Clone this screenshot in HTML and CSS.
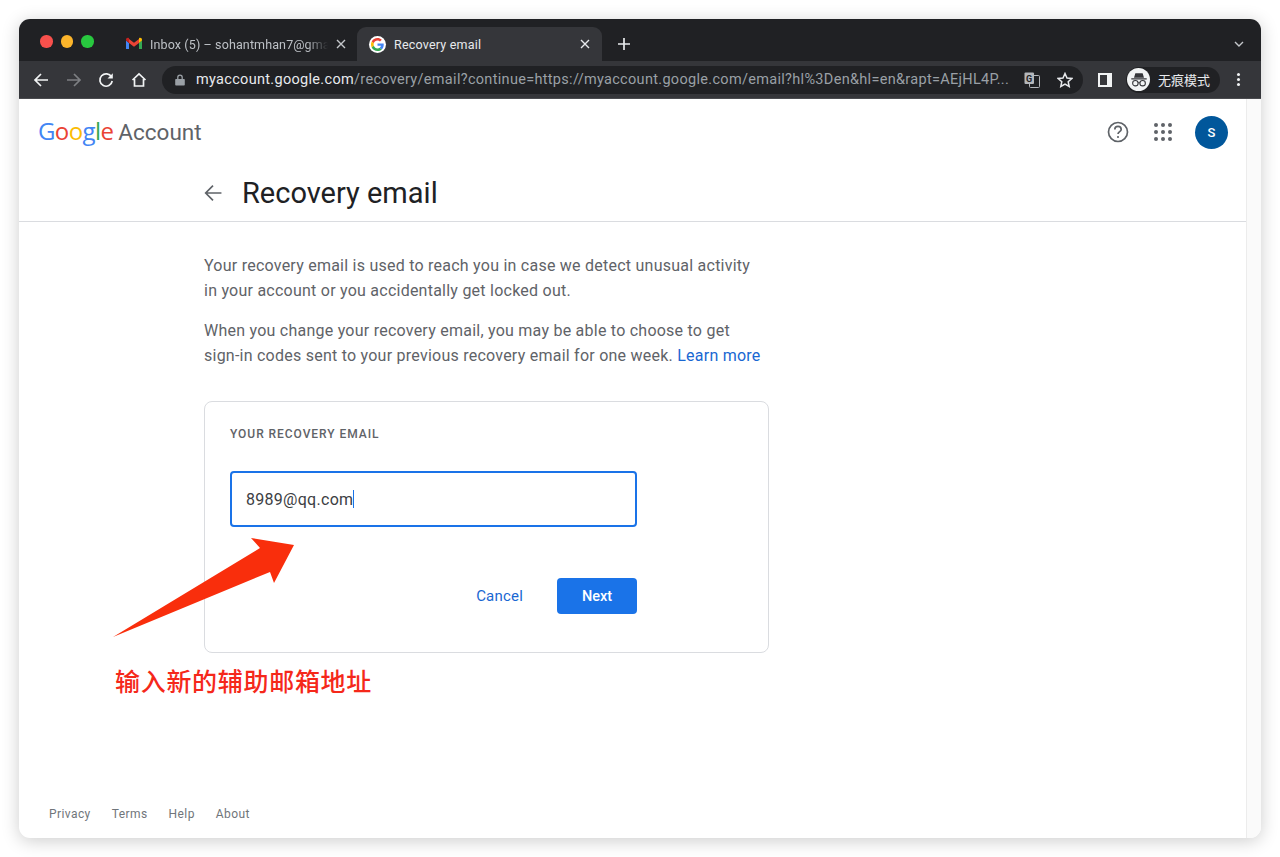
FILE: index.html
```html
<!DOCTYPE html>
<html lang="en">
<head>
    <meta charset="UTF-8">
    <meta name="viewport" content="width=device-width, initial-scale=1.0">
    <title>Recovery email</title>
    <link rel="stylesheet" href="styles.css">
</head>
<body>

<div class="window">

    <!-- Tab strip -->
    <div class="tabstrip">
        <div class="traffic">
            <span class="dot dot-red"></span>
            <span class="dot dot-yellow"></span>
            <span class="dot dot-green"></span>
        </div>

        <div class="tab tab-inactive">
            <svg class="favicon" viewBox="0 0 16 16">
                <path fill="#4285f4" d="M0 13h3V7L0 4.500z"/>
                <path fill="#34a853" d="M13 13h3V4.500L13 7z"/>
                <path fill="#ea4335" d="M3 7V3l5 3.800L13 3v4l-5 3.800z"/>
                <path fill="#c5221f" d="M0 4.500V3.500C0 2 1.800 1.200 3 2.200V7z"/>
                <path fill="#fbbc04" d="M16 4.500V3.500C16 2 14.200 1.200 13 2.200V7z"/>
            </svg>
            <span class="tab-title tab-title-fade">Inbox (5) – sohantmhan7@gma</span>
            <svg class="tab-close" viewBox="0 0 10 10"><path d="M1 1l8 8M9 1l-8 8"/></svg>
        </div>

        <div class="tab tab-active">
            <span class="favicon-ring">
                <svg class="favicon-g" viewBox="0 0 48 48">
                    <path fill="#ea4335" d="M24 9.500c3.500 0 6.700 1.300 9.100 3.500l6.800-6.800C35.800 2.400 30.200 0 24 0 14.600 0 6.500 5.400 2.600 13.200l7.900 6.100C12.400 13.600 17.700 9.500 24 9.500z"/>
                    <path fill="#4285f4" d="M47 24.500c0-1.600-.1-3.100-.4-4.500H24v9h12.900c-.6 3-2.200 5.500-4.700 7.200l7.700 6C44.400 38 47 31.800 47 24.500z"/>
                    <path fill="#fbbc05" d="M10.500 28.700c-.5-1.500-.8-3-.8-4.700s.3-3.200.8-4.700l-7.900-6.100C.9 16.500 0 20.100 0 24s.9 7.500 2.600 10.800z"/>
                    <path fill="#34a853" d="M24 48c6.500 0 11.900-2.100 15.900-5.800l-7.700-6c-2.200 1.500-4.900 2.300-8.200 2.300-6.300 0-11.600-4.100-13.500-9.800l-7.900 6.100C6.500 42.600 14.600 48 24 48z"/>
                </svg>
            </span>
            <span class="tab-title tab-title-active">Recovery email</span>
            <svg class="tab-close tab-close-active" viewBox="0 0 10 10"><path d="M1 1l8 8M9 1l-8 8"/></svg>
        </div>

        <svg class="new-tab" viewBox="0 0 14 14"><path d="M7 1v12M1 7h12"/></svg>
        <svg class="tab-search" viewBox="0 0 10 6"><path d="M1 1l4 4 4-4"/></svg>
    </div>

    <!-- Toolbar -->
    <div class="toolbar">
        <div class="nav-buttons">
            <svg class="nav-icon" viewBox="0 0 16 16"><path d="M15 8H2M8 2L2 8l6 6"/></svg>
            <svg class="nav-icon nav-icon-off" viewBox="0 0 16 16"><path d="M1 8h13M8 2l6 6-6 6"/></svg>
            <svg class="nav-icon" viewBox="0 0 16 16"><path d="M13.500 5A6.200 6.200 0 1 0 14.200 9"/><path class="fill-white" d="M14.800 1.200v5.300H9.500z"/></svg>
            <svg class="nav-icon" viewBox="0 0 16 16"><path d="M1.500 8L8 2l6.500 6M3.500 7v7h9V7"/></svg>
        </div>

        <div class="omnibox">
            <svg class="lock" viewBox="0 0 10 12">
                <path d="M1 5h8a.8.8 0 0 1 .8.8v5a.8.8 0 0 1-.8.800H1a.8.8 0 0 1-.8-.8v-5A.8.8 0 0 1 1 5z"/>
                <path class="lock-loop" d="M2.800 5V3.300a2.200 2.200 0 0 1 4.400 0V5"/>
            </svg>
            <span class="url"><span class="url-host">myaccount.google.com</span>/recovery/email?continue=https://myaccount.google.com/email?hl%3Den&amp;hl=en&amp;rapt=AEjHL4P...</span>
            <svg class="translate" viewBox="0 0 16 16">
                <rect class="translate-back" x="5.500" y="3.500" width="10" height="12" rx="1"/>
                <rect class="translate-front" x="0.500" y="0.500" width="9.500" height="11.500" rx="1"/>
                <text class="translate-mark" x="2" y="9.500">G</text>
            </svg>
            <svg class="star" viewBox="0 0 16 16"><path d="M8 1.500l2 4.500 4.800.5-3.600 3.200 1 4.800L8 12.100l-4.200 2.400 1-4.800L1.200 6.500 6 6z"/></svg>
        </div>

        <div class="side-panel"><span></span></div>

        <div class="incognito">
            <span class="incognito-badge">
                <svg viewBox="0 0 22 22">
                    <path class="spy-hat" d="M7 3.500h8l1.500 5H5.500zM2.500 9h17v1.500h-17z"/>
                    <circle class="spy-eye" cx="7" cy="14.500" r="3"/>
                    <circle class="spy-eye" cx="15" cy="14.500" r="3"/>
                    <path class="spy-eye" d="M10 14h2"/>
                </svg>
            </span>
            <span class="incognito-label">无痕模式</span>
        </div>

        <div class="kebab"><span></span><span></span><span></span></div>
    </div>

    <!-- Page -->
    <div class="viewport">
        <div class="page">
            <header class="account-bar">
                <div class="logo">
                    <span class="logo-google"><span class="g-blue">G</span><span class="g-red">o</span><span class="g-yellow">o</span><span class="g-blue">g</span><span class="g-green">l</span><span class="g-red">e</span></span>
                    <span class="logo-account">Account</span>
                </div>
                <div class="account-actions">
                    <svg class="help" viewBox="0 0 22 22">
                        <circle cx="11" cy="11" r="9.500"/>
                        <path d="M7.800 8.500a3.200 3.200 0 0 1 6.400 0c0 2-3.200 2.300-3.200 4.500"/>
                        <circle class="help-dot" cx="11" cy="16" r="1.100"/>
                    </svg>
                    <div class="apps">
                        <span></span><span></span><span></span>
                        <span></span><span></span><span></span>
                        <span></span><span></span><span></span>
                    </div>
                    <div class="avatar">S</div>
                </div>
            </header>

            <div class="title-row">
                <svg class="title-back" viewBox="0 0 16 16"><path d="M15.500 8H1.500M8 1.500L1.500 8 8 14.500"/></svg>
                <h1>Recovery email</h1>
            </div>

            <main class="content">
                <p>Your recovery email is used to reach you in case we detect unusual activity<br>in your account or you accidentally get locked out.</p>
                <p>When you change your recovery email, you may be able to choose to get<br>sign-in codes sent to your previous recovery email for one week. <a class="link" href="#">Learn more</a></p>

                <section class="card">
                    <div class="card-label">YOUR RECOVERY EMAIL</div>
                    <div class="field"><span>8989@qq.com</span><i class="caret"></i></div>
                    <div class="card-actions">
                        <a class="cancel" href="#">Cancel</a>
                        <button class="next">Next</button>
                    </div>
                </section>
            </main>

            <footer class="page-footer">
                <a href="#">Privacy</a>
                <a href="#">Terms</a>
                <a href="#">Help</a>
                <a href="#">About</a>
            </footer>
        </div>
        <div class="scroll-gutter"></div>

        <!-- Annotation drawn over the page -->
        <svg class="note-arrow" viewBox="0 0 190 110"><path d="M1 100L148 11 139 1 182 8 162 46 158 35z"/></svg>
        <div class="note-text">输入新的辅助邮箱地址</div>
    </div>
</div>

</body>
</html>
```

FILE: styles.css
```css
* {
    box-sizing: border-box;
}

html, body {
    height: 100%;
}

body {
    margin: 0;
    padding: 19px;
    background-color: #fff;
    font-family: 'Roboto', 'Liberation Sans', sans-serif;
}

.window {
    display: flex;
    flex-direction: column;
    height: 819px;
    border-radius: 11px;
    overflow: hidden;
    background-color: #fff;
    box-shadow: 0 3px 18px rgba(0, 0, 0, 0.2);
}

/* tab strip */
.tabstrip {
    display: flex;
    align-items: flex-end;
    height: 42px;
    flex-shrink: 0;
    background-color: #202124;
}

.traffic {
    display: flex;
    gap: 8px;
    align-self: flex-start;
    width: 94px;
    padding: 16px 0 0 21px;
}

.dot {
    width: 12.500px;
    height: 12.500px;
    border-radius: 50%;
}

.dot-red { background-color: #f8504c; }
.dot-yellow { background-color: #fcb52b; }
.dot-green { background-color: #28c83f; }

.tab {
    display: flex;
    align-items: center;
    height: 34px;
    border-radius: 9px 9px 0 0;
}

.tab-inactive {
    width: 244px;
    padding-left: 13px;
}

.tab-active {
    width: 245px;
    padding-left: 12px;
    background-color: #35363a;
}

.favicon {
    width: 16px;
    height: 16px;
    flex-shrink: 0;
}

.favicon-ring {
    display: flex;
    align-items: center;
    justify-content: center;
    width: 17px;
    height: 17px;
    flex-shrink: 0;
    border-radius: 50%;
    background-color: #fff;
}

.favicon-g {
    width: 13px;
    height: 13px;
}

.tab-title {
    font-size: 12.500px;
    white-space: nowrap;
}

.tab-title-fade {
    width: 178px;
    margin-left: 8px;
    letter-spacing: 0.120px;
    color: #bdc1c6;
    -webkit-mask-image: linear-gradient(to right, #000 88%, transparent);
    mask-image: linear-gradient(to right, #000 88%, transparent);
}

.tab-title-active {
    width: 179px;
    margin-left: 8px;
    letter-spacing: 0.200px;
    color: #e8eaed;
}

.tab-close {
    width: 10px;
    height: 10px;
    margin-left: 8px;
    fill: none;
    stroke: #c4c7cb;
    stroke-width: 1.400;
}

.tab-close-active {
    margin-left: 7px;
    stroke: #e8eaed;
}

.new-tab {
    width: 14px;
    height: 14px;
    margin: 0 0 10px 15px;
    fill: none;
    stroke: #e8eaed;
    stroke-width: 1.700;
}

.tab-search {
    width: 10px;
    height: 6px;
    margin: 0 17px 14px auto;
    fill: none;
    stroke: #c4c7cb;
    stroke-width: 1.400;
}

/* toolbar */
.toolbar {
    display: flex;
    align-items: center;
    height: 38px;
    flex-shrink: 0;
    background-color: #35363a;
    border-bottom: 1px solid #4a4b4f;
}

.nav-buttons {
    display: flex;
    gap: 16.600px;
    width: 143px;
    padding-left: 14px;
}

.nav-icon {
    width: 16px;
    height: 16px;
    fill: none;
    stroke: #f1f3f4;
    stroke-width: 1.700;
}

.nav-icon-off {
    stroke: #7d7f83;
}

.fill-white {
    fill: #f1f3f4;
    stroke: none;
}

.omnibox {
    display: flex;
    align-items: center;
    width: 921px;
    height: 28px;
    padding-left: 13px;
    border-radius: 14px;
    background-color: #202124;
}

.lock {
    width: 10px;
    height: 12px;
    flex-shrink: 0;
    fill: #9aa0a6;
}

.lock-loop {
    fill: none;
    stroke: #9aa0a6;
    stroke-width: 1.300;
}

.url {
    width: 828px;
    margin-left: 11px;
    font-size: 14.500px;
    letter-spacing: 0.310px;
    color: #9aa0a6;
    white-space: nowrap;
}

.url-host {
    color: #e8eaed;
}

.translate {
    width: 16px;
    height: 16px;
    flex-shrink: 0;
}

.translate-back {
    fill: #202124;
    stroke: #b4b7bb;
}

.translate-front {
    fill: #b4b7bb;
}

.translate-mark {
    font-size: 9px;
    font-weight: 700;
    fill: #202124;
}

.star {
    width: 16px;
    height: 16px;
    flex-shrink: 0;
    margin-left: 17px;
    fill: none;
    stroke: #e8eaed;
    stroke-width: 1.500;
}

.side-panel {
    width: 14px;
    height: 14px;
    margin-left: 15px;
    border: 2px solid #f1f3f4;
    border-right-width: 5px;
    flex-shrink: 0;
}

.incognito {
    display: flex;
    align-items: center;
    width: 94px;
    height: 26px;
    margin-left: 14px;
    padding-left: 1px;
    border-radius: 13px;
    background-color: #202124;
}

.incognito-badge {
    display: flex;
    align-items: center;
    justify-content: center;
    width: 23px;
    height: 23px;
    border-radius: 50%;
    background-color: #f1f3f4;
}

.incognito-badge svg {
    width: 20px;
    height: 20px;
}

.spy-hat {
    fill: #35363a;
}

.spy-eye {
    fill: none;
    stroke: #35363a;
    stroke-width: 1.200;
}

.incognito-label {
    margin-left: 8px;
    font-family: 'Noto Sans CJK SC', sans-serif;
    font-size: 13px;
    color: #e8eaed;
}

.kebab {
    display: flex;
    flex-direction: column;
    gap: 2px;
    margin-left: 17px;
}

.kebab span {
    width: 3px;
    height: 3px;
    border-radius: 50%;
    background-color: #f1f3f4;
}

/* page */
.viewport {
    position: relative;
    display: flex;
    flex: 1;
    min-height: 0;
}

.page {
    display: flex;
    flex-direction: column;
    flex: 1;
    min-width: 0;
}

.scroll-gutter {
    width: 15px;
    background-color: #fafafa;
    border-left: 1px solid #ececec;
}

.account-bar {
    display: flex;
    align-items: center;
    justify-content: space-between;
    height: 66px;
    padding: 0 18px 0 19px;
}

.logo {
    display: flex;
    align-items: baseline;
    gap: 5px;
    margin-top: -4px;
}

.logo-google {
    font-family: 'Open Sans', sans-serif;
    font-size: 24px;
    font-weight: 500;
    letter-spacing: -0.600px;
}

.logo-account {
    font-size: 22.500px;
    color: #5f6368;
}

.g-blue { color: #4285f4; }
.g-red { color: #ea4335; }
.g-yellow { color: #fbbc05; }
.g-green { color: #34a853; }

.account-actions {
    display: flex;
    align-items: center;
}

.help {
    width: 22px;
    height: 22px;
    fill: none;
    stroke: #5f6368;
    stroke-width: 1.700;
}

.help-dot {
    fill: #5f6368;
    stroke: none;
}

.apps {
    display: grid;
    grid-template-columns: repeat(3, 4px);
    gap: 3px;
    margin-left: 25px;
}

.apps span {
    width: 4px;
    height: 4px;
    border-radius: 50%;
    background-color: #5f6368;
}

.avatar {
    display: flex;
    align-items: center;
    justify-content: center;
    width: 33px;
    height: 33px;
    margin-left: 23px;
    border-radius: 50%;
    background-color: #01579b;
    color: #fff;
    font-size: 13px;
    font-weight: 500;
}

.title-row {
    display: flex;
    align-items: center;
    height: 57px;
    padding-left: 185px;
    border-bottom: 1px solid #dadce0;
}

.title-back {
    width: 18px;
    height: 18px;
    fill: none;
    stroke: #5f6368;
    stroke-width: 1.500;
}

h1 {
    margin: 0 0 0 20px;
    font-size: 29px;
    font-weight: 400;
    color: #202124;
}

.content {
    flex: 1;
    padding: 31px 0 0 185px;
}

.content p {
    margin: 0 0 15px;
    font-size: 16px;
    line-height: 25px;
    letter-spacing: 0.240px;
    color: #5f6368;
}

.link {
    color: #1967d2;
    text-decoration: none;
}

.card {
    width: 565px;
    height: 252px;
    margin-top: 33px;
    padding: 25px 25px 0;
    border: 1px solid #dadce0;
    border-radius: 8px;
}

.card-label {
    font-size: 12px;
    font-weight: 500;
    line-height: 14px;
    letter-spacing: 0.950px;
    color: #5f6368;
}

.field {
    display: flex;
    align-items: center;
    width: 407px;
    height: 56px;
    margin-top: 30px;
    padding-left: 14px;
    border: 2px solid #1a73e8;
    border-radius: 4px;
    font-size: 16px;
    letter-spacing: 0.280px;
    color: #3c4043;
}

.caret {
    width: 1px;
    height: 18px;
    background-color: #1a73e8;
}

.card-actions {
    display: flex;
    align-items: center;
    justify-content: flex-end;
    width: 407px;
    margin-top: 51px;
}

.cancel {
    margin-right: 34px;
    font-size: 15px;
    letter-spacing: 0.200px;
    color: #1967d2;
    text-decoration: none;
}

.next {
    width: 80px;
    height: 36px;
    padding: 0;
    border: none;
    border-radius: 4px;
    background-color: #1a73e8;
    color: #fff;
    font-family: inherit;
    font-size: 14.500px;
    font-weight: 500;
}

.page-footer {
    display: flex;
    gap: 21px;
    height: 48px;
    padding: 17px 0 0 30px;
}

.page-footer a {
    font-size: 12px;
    line-height: 14px;
    letter-spacing: 0.420px;
    color: #70757a;
    text-decoration: none;
}

/* annotation */
.note-arrow {
    position: absolute;
    left: 93px;
    top: 438px;
    width: 190px;
    height: 110px;
}

.note-arrow path {
    fill: #f92e0c;
}

.note-text {
    position: absolute;
    left: 96px;
    top: 563px;
    font-family: 'Noto Sans CJK SC', sans-serif;
    font-size: 25px;
    font-weight: 500;
    line-height: 36px;
    letter-spacing: 0.700px;
    color: #f5281a;
}
```
